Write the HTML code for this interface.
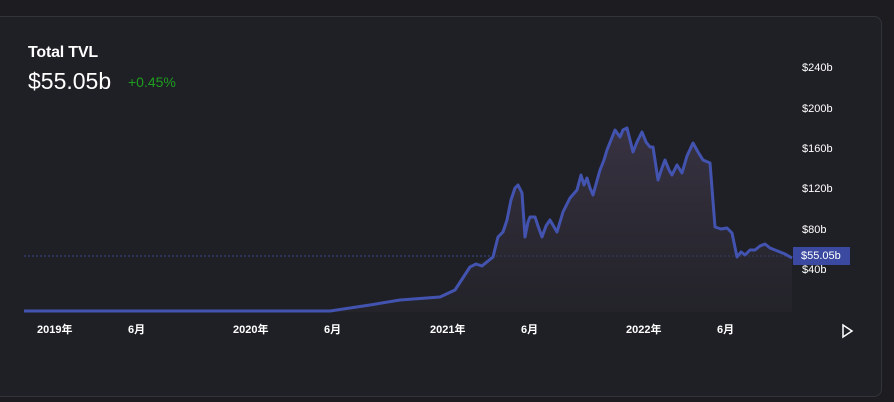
<!DOCTYPE html><html><head><style>
body{margin:0;width:894px;height:402px;background:#1c1c21;font-family:"Liberation Sans","Noto Sans CJK SC",sans-serif;overflow:hidden;position:relative}
.card{position:absolute;left:-10px;top:16px;width:890px;height:379px;background:#1f2026;border:1px solid #33343b;border-radius:8px}
.t{position:absolute;color:#fff}
.ax{position:absolute;color:#fff;font-size:11px;font-weight:bold}
.yl{position:absolute;left:802px;color:#fff;font-size:11px}
</style></head><body>
<div class="card"></div>
<div class="t" style="left:28px;top:44px;font-size:16px;font-weight:bold;letter-spacing:-0.2px">Total TVL</div>
<div class="t" style="left:28px;top:68px;font-size:23px">$55.05b</div>
<div class="t" style="left:128px;top:74px;font-size:14px;color:#1e9e1e">+0.45%</div>
<svg style="position:absolute;left:0;top:0" width="894" height="402">
<defs><linearGradient id="g" x1="0" y1="0" x2="0" y2="1"><stop offset="0" stop-color="#4a3f55" stop-opacity=".6"/><stop offset="1" stop-color="#2a2830" stop-opacity=".4"/></linearGradient></defs>
<line x1="24" y1="256" x2="792" y2="256" stroke="#3a4a8a" stroke-dasharray="2,2" stroke-width="1"/>
<path d="M24,311 L330,311 L370,305 L400,300 L440,297 L455,290 L470,267 L493,257 L498,237 L507,220 L515,188 L518,185 L522,193 L525,237 L530,217 L535,217 L542,237 L550,220 L557,232 L570,198 L577,190 L581,175 L584,185 L587,178 L593,195 L600,170 L607,150 L615,130 L620,137 L627,128 L633,152 L642,132 L650,147 L653,147 L658,180 L665,160 L672,175 L677,165 L682,173 L693,143 L703,160 L710,163 L715,227 L727,228 L732,233 L737,257 L745,255 L755,250 L765,244 L775,250 L785,254 L792,258 L792,312 L24,312Z" fill="url(#g)"/>
<path d="M24,311 L330,311 L370,305 L400,300 L440,297 L455,290 L470,267 L476,264 L482,266 L493,257 L498,237 L503,232 L507,220 L511,200 L515,188 L518,185 L522,193 L525,237 L528,222 L530,217 L535,217 L538,226 L542,237 L546,226 L550,220 L557,232 L563,212 L570,198 L577,190 L581,175 L584,185 L587,178 L590,188 L593,195 L600,170 L604,160 L607,150 L611,140 L615,130 L620,137 L623,130 L627,128 L630,140 L633,152 L637,142 L642,132 L646,142 L650,147 L653,147 L658,180 L662,168 L665,160 L669,170 L672,175 L677,165 L682,173 L687,156 L693,143 L698,152 L703,160 L710,163 L715,227 L721,229 L727,228 L732,233 L737,257 L741,252 L745,255 L750,250 L755,250 L760,246 L765,244 L770,248 L775,250 L780,252 L785,254 L792,258" fill="none" stroke="#4353b0" stroke-width="3" stroke-linejoin="round"/>
<rect x="793" y="247" width="57" height="18" fill="#3b4aa0"/>
<path d="M843,325 L852,331 L843,337Z" fill="none" stroke="#fff" stroke-width="1.5"/>
</svg>
<div class="yl" style="top:62px">$240b</div>
<div class="yl" style="top:103px">$200b</div>
<div class="yl" style="top:143px">$160b</div>
<div class="yl" style="top:183px">$120b</div>
<div class="yl" style="top:224px">$80b</div>
<div class="yl" style="top:250px;left:801px">$55.05b</div>
<div class="yl" style="top:264px">$40b</div>
<div class="ax" style="left:37px;top:321px">2019年</div>
<div class="ax" style="left:128px;top:321px">6月</div>
<div class="ax" style="left:233px;top:321px">2020年</div>
<div class="ax" style="left:324px;top:321px">6月</div>
<div class="ax" style="left:430px;top:321px">2021年</div>
<div class="ax" style="left:521px;top:321px">6月</div>
<div class="ax" style="left:626px;top:321px">2022年</div>
<div class="ax" style="left:717px;top:321px">6月</div>
</body></html>
